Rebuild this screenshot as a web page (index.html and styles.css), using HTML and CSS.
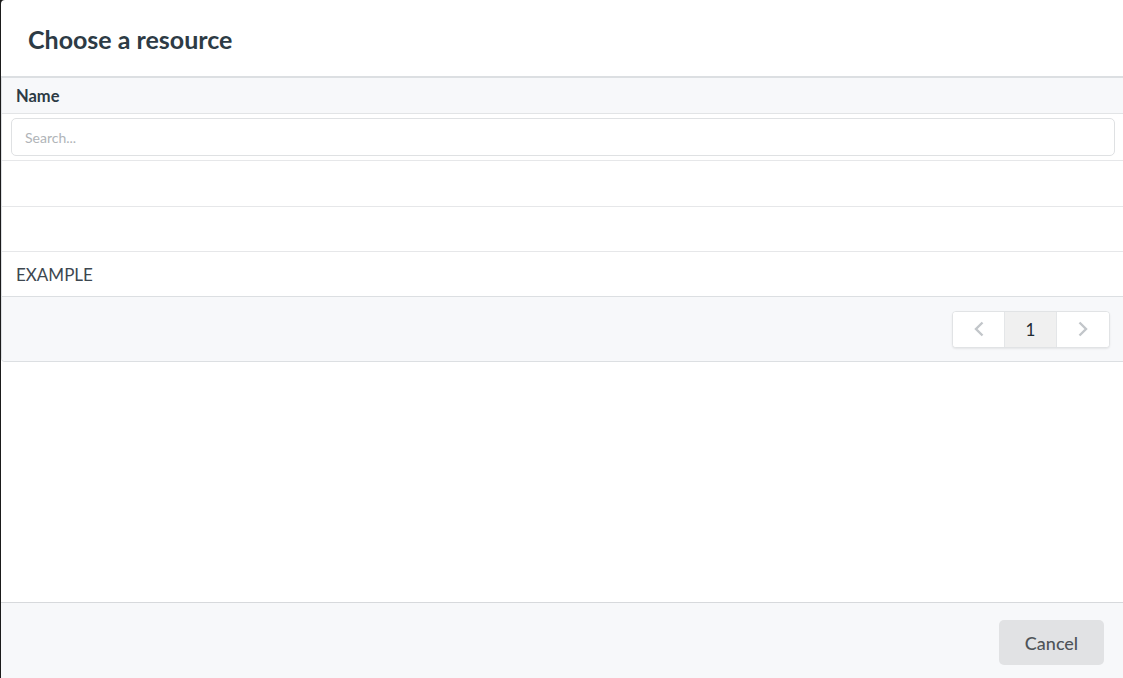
FILE: index.html
```html
<!DOCTYPE html>
<html>
<head>
<meta charset="utf-8">
<link rel="stylesheet" href="styles.css">
</head>
<body>
<div class="modal">
  <div class="modal-header">
    <h2 class="title">Choose a resource</h2>
  </div>
  <div class="modal-body">
    <div class="table">
      <div class="th">Name</div>
      <div class="search-row">
        <input class="search" type="text" placeholder="Search...">
      </div>
      <div class="row"></div>
      <div class="row"></div>
      <div class="row">EXAMPLE</div>
      <div class="table-footer">
        <div class="pager">
          <button class="pg"><svg width="14" height="18" viewBox="0 0 14 18"><path d="M10.5 2.5 L4 9 L10.5 15.5" fill="none" stroke="#c2c6ca" stroke-width="2.4"/></svg></button>
          <button class="pg active">1</button>
          <button class="pg"><svg width="14" height="18" viewBox="0 0 14 18"><path d="M3.5 2.5 L10 9 L3.5 15.5" fill="none" stroke="#c2c6ca" stroke-width="2.4"/></svg></button>
        </div>
      </div>
    </div>
  </div>
  <div class="modal-footer">
    <button class="cancel">Cancel</button>
  </div>
</div>
</body>
</html>
```

FILE: styles.css
```css
html, body {
  margin: 0;
  padding: 0;
  height: 100%;
  overflow: hidden;
  background: #1b1b1b;
  font-family: Lato, "Open Sans", sans-serif;
  color: #2d3b45;
}
.modal {
  margin-left: 1px;
  width: 1125px;
  height: 678px;
  background: #fff;
  border-radius: 4px 0 0 0;
  display: flex;
  flex-direction: column;
}
.modal-header {
  height: 76px;
  box-sizing: border-box;
  padding: 24px 0 0 27px;
}
.title {
  margin: 0;
  font-size: 25px;
  font-weight: 700;
  line-height: 30px;
  color: #2d3b45;
}
.modal-body {
  flex: 1;
}
.table {
  border: 1px solid #dcdfe2;
  border-top: 2px solid #dcdfe2;
  border-radius: 0 0 0 4px;
}
.th {
  height: 36px;
  box-sizing: border-box;
  background: #f7f8fa;
  border-bottom: 1px solid #e2e4e6;
  padding: 8px 0 0 14px;
  font-size: 16.5px;
  font-weight: 700;
  line-height: 20px;
}
.search-row {
  height: 47px;
  box-sizing: border-box;
  padding: 4px 10px 0 9px;
  border-bottom: 1px solid #e6e7e9;
}
.search {
  display: block;
  width: 100%;
  box-sizing: border-box;
  height: 38px;
  border: 1px solid #dfe1e3;
  border-radius: 5px;
  padding: 0 13px;
  font-family: Lato, sans-serif;
  font-size: 14px;
  color: #2d3b45;
  outline: none;
}
.search::placeholder {
  color: #b0b4b8;
}
.row {
  height: 45px;
  box-sizing: border-box;
  border-bottom: 1px solid #e6e7e9;
  padding: 12px 0 0 14px;
  font-size: 17px;
  line-height: 21px;
  color: #3d4750;
}
.row:nth-child(3) { height: 46px; }
.table-footer {
  height: 65px;
  background: #f7f8fa;
  border-top: 1px solid #dcdfe2;
  margin-top: -1px;
  box-sizing: border-box;
  display: flex;
  justify-content: flex-end;
  align-items: center;
  padding-right: 15px;
  border-radius: 0 0 0 4px;
}
.pager {
  display: flex;
  border: 1px solid #e1e3e5;
  border-radius: 4px;
  background: #fff;
  box-shadow: 0 1px 2px rgba(0,0,0,0.08);
  overflow: hidden;
}
.pg {
  width: 52px;
  height: 35px;
  border: none;
  border-right: 1px solid #e4e6e8;
  background: #fff;
  font-family: Lato, sans-serif;
  font-size: 17px;
  color: #1f2b33;
  padding: 0;
  display: flex;
  align-items: center;
  justify-content: center;
}
.pg:last-child { border-right: none; }
.pg.active { background: #f0f0f0; }
.modal-footer {
  height: 76px;
  box-sizing: border-box;
  background: #f7f8fa;
  border-top: 1px solid #d7d9dc;
  display: flex;
  justify-content: flex-end;
  align-items: flex-start;
  padding: 17px 22px 0 0;
}
.cancel {
  width: 105px;
  height: 45px;
  border: none;
  border-radius: 5px;
  background: #e1e2e4;
  font-family: Lato, sans-serif;
  font-size: 18px;
  font-weight: 500;
  color: #4f5458;
}
```
